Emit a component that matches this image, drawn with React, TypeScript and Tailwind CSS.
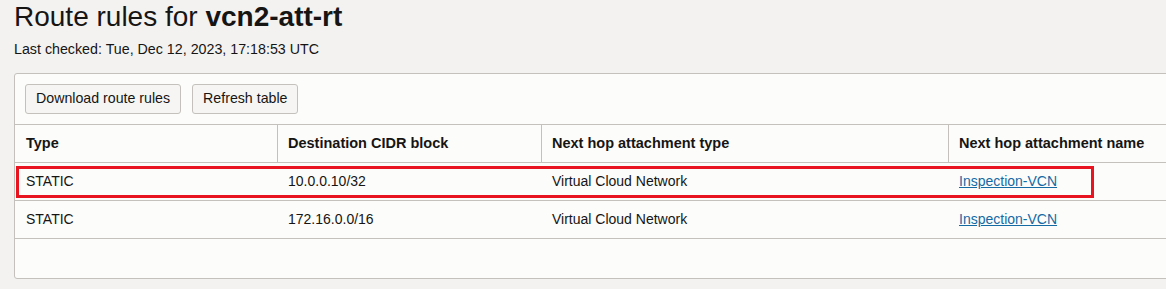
import React from 'react';

const rows = [
  { type: 'STATIC', cidr: '10.0.0.10/32', hopType: 'Virtual Cloud Network', hopName: 'Inspection-VCN', highlight: true },
  { type: 'STATIC', cidr: '172.16.0.0/16', hopType: 'Virtual Cloud Network', hopName: 'Inspection-VCN', highlight: false },
];

const App: React.FC = () => {
  return (
    <div className="w-[1166px] h-[289px] overflow-hidden bg-[#f3f2f1] text-[#161513] font-['Liberation_Sans',Arial,sans-serif]">
      <div className="pl-[14px]">
        <h1 className="text-[28px] leading-[32px] pt-[1px]">
          Route rules for <span className="font-bold">vcn2-att-rt</span>
        </h1>
        <p className="text-[14.25px] leading-[16px] mt-[8px]">Last checked: Tue, Dec 12, 2023, 17:18:53 UTC</p>

        <div className="mt-[16px] w-[1180px] bg-[#fcfcfb] border border-[#c4c1bc] rounded-[3px]">
          <div className="flex gap-[11px] px-[10px] pt-[10px] pb-[10px]">
            <button className="h-[30px] px-[10px] text-[14.2px] bg-[#f6f5f3] border border-[#c4c1bc] rounded-[3px]">
              Download route rules
            </button>
            <button className="h-[30px] px-[10px] text-[14.2px] bg-[#f6f5f3] border border-[#c4c1bc] rounded-[3px]">
              Refresh table
            </button>
          </div>

          <div className="relative">
            <div className="grid grid-cols-[263px_264px_407px_1fr] border-t border-b border-[#c4c1bc] h-[39px] text-[14.5px] font-bold">
              <div className="flex items-center pl-[11px] border-r border-[#c4c1bc]">Type</div>
              <div className="flex items-center pl-[10px] border-r border-[#c4c1bc]">Destination CIDR block</div>
              <div className="flex items-center pl-[10px] border-r border-[#c4c1bc]">Next hop attachment type</div>
              <div className="flex items-center pl-[10px]">Next hop attachment name</div>
            </div>

            {rows.map((r, i) => (
              <div
                key={i}
                className="relative grid grid-cols-[263px_264px_407px_1fr] border-b border-[#c4c1bc] h-[38px] text-[14px]"
              >
                <div className="flex items-center pl-[11px]">{r.type}</div>
                <div className="flex items-center pl-[10px]">{r.cidr}</div>
                <div className="flex items-center pl-[10px]">{r.hopType}</div>
                <div className="flex items-center pl-[10px]">
                  <a href="#" className="text-[#146aa3] underline">{r.hopName}</a>
                </div>
                {r.highlight && (
                  <div className="absolute left-[1px] top-[3px] w-[1078px] h-[32px] border-[3px] border-[#e8141f] pointer-events-none" />
                )}
              </div>
            ))}

            <div className="h-[39px]" />
          </div>
        </div>
      </div>
    </div>
  );
};

export default App;
